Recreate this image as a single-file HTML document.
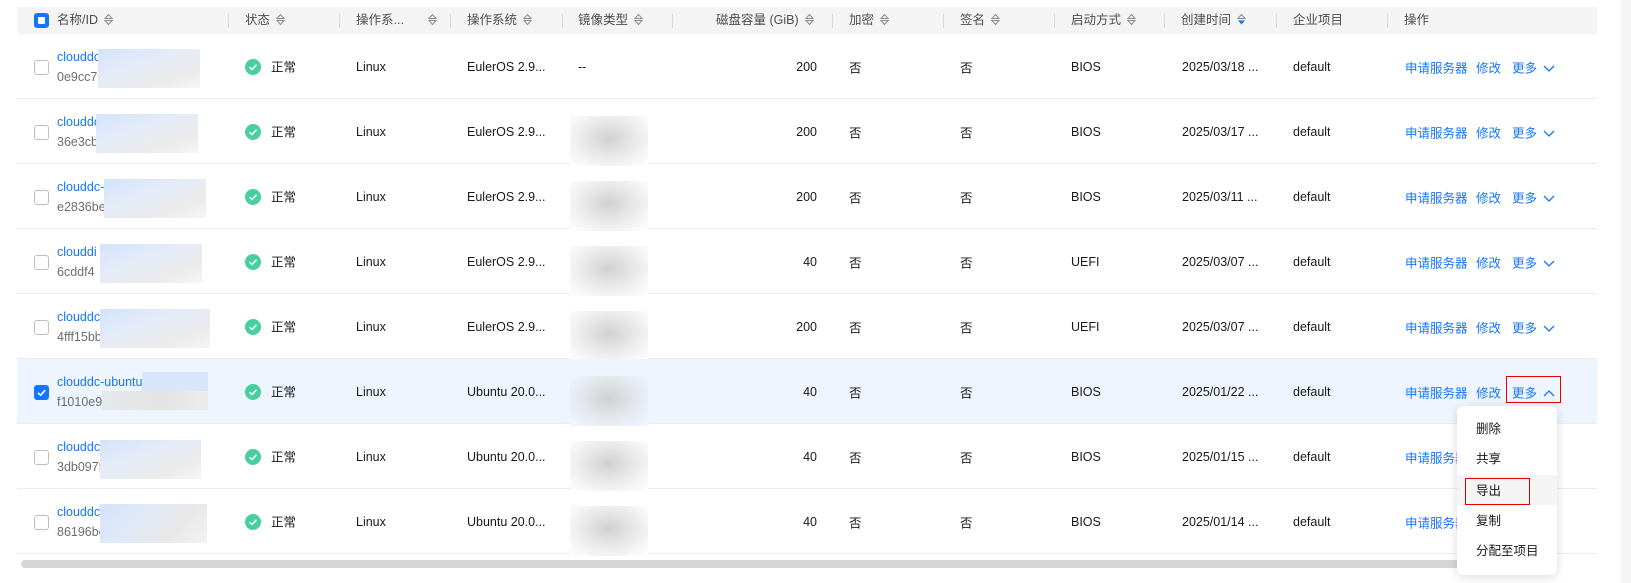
<!DOCTYPE html>
<html><head><meta charset="utf-8"><style>
*{margin:0;padding:0;box-sizing:border-box}
body{width:1631px;height:583px;background:#fff;position:relative;overflow:hidden;font-family:"Liberation Sans","Noto Sans CJK SC",sans-serif;font-size:12.5px;color:#191919}
.a{position:absolute;white-space:nowrap}
.hd{position:absolute;left:17px;top:7px;width:1580px;height:27px;background:#f4f4f4}
.h{position:absolute;top:0;line-height:27px;color:#4d4d4d;white-space:nowrap}
.sep{position:absolute;top:7px;width:1px;height:14px;background:#d9d9d9}
.si{display:inline-block;vertical-align:middle;margin-left:6px;margin-top:-3px}
.row{position:absolute;left:17px;width:1580px;height:65px;border-bottom:1px solid #ececec}
.row .c{position:absolute;top:33px;transform:translateY(-50%);white-space:nowrap}
.row .st{top:32px}
.cb{position:absolute;left:17px;top:26px;width:15px;height:15px;border:1px solid #bfbfbf;border-radius:3px;background:#fff}
.nm{position:absolute;left:40px;top:15px;color:#1476ff;line-height:16px}
.id{position:absolute;left:40px;top:35px;color:#6e6e6e;line-height:16px}
.bl{position:absolute;left:83px;top:15px;width:102px;height:39px;background:linear-gradient(160deg,#d3e3fc 0%,#e5ecf8 40%,#ebebeb 75%,#f6f6f6 100%)}
.gb{position:absolute;left:553px;top:17px;width:78px;height:50px;background:radial-gradient(ellipse at 50% 45%,#d0d0d0 0%,#e6e6e6 40%,#f6f6f6 75%,#fff 100%)}
.ok{position:absolute;left:228px;top:25px;width:16px;height:16px;border-radius:50%;background:#48cf9f}
.lk{color:#1476ff}
</style></head><body>

<div class="hd">
 <div style="position:absolute;left:17px;top:6px;width:15px;height:15px;border-radius:3px;background:#1476ff"><div style="position:absolute;left:4px;top:4px;width:7px;height:7px;background:#fff;border-radius:1px"></div></div>
 <div class="h" style="left:40px">名称/ID<svg class="si" width="9" height="13" viewBox="0 0 9 13"><path d="M1 5.5L4.5 1.5L8 5.5ZM1 7.5L4.5 11.5L8 7.5Z" fill="none" stroke="#8c8c8c" stroke-width="1"/></svg></div>
 <div class="sep" style="left:211px"></div>
 <div class="h" style="left:228px">状态<svg class="si" width="9" height="13" viewBox="0 0 9 13"><path d="M1 5.5L4.5 1.5L8 5.5ZM1 7.5L4.5 11.5L8 7.5Z" fill="none" stroke="#8c8c8c"/></svg></div>
 <div class="sep" style="left:322px"></div>
 <div class="h" style="left:339px">操作系...</div><div class="h" style="left:405px"><svg class="si" width="9" height="13" viewBox="0 0 9 13"><path d="M1 5.5L4.5 1.5L8 5.5ZM1 7.5L4.5 11.5L8 7.5Z" fill="none" stroke="#8c8c8c"/></svg></div>
 <div class="sep" style="left:433px"></div>
 <div class="h" style="left:450px">操作系统<svg class="si" width="9" height="13" viewBox="0 0 9 13"><path d="M1 5.5L4.5 1.5L8 5.5ZM1 7.5L4.5 11.5L8 7.5Z" fill="none" stroke="#8c8c8c"/></svg></div>
 <div class="sep" style="left:545px"></div>
 <div class="h" style="left:561px">镜像类型<svg class="si" width="9" height="13" viewBox="0 0 9 13"><path d="M1 5.5L4.5 1.5L8 5.5ZM1 7.5L4.5 11.5L8 7.5Z" fill="none" stroke="#8c8c8c"/></svg></div>
 <div class="sep" style="left:655px"></div>
 <div class="h" style="left:699px">磁盘容量 (GiB)<svg class="si" width="9" height="13" viewBox="0 0 9 13"><path d="M1 5.5L4.5 1.5L8 5.5ZM1 7.5L4.5 11.5L8 7.5Z" fill="none" stroke="#8c8c8c"/></svg></div>
 <div class="sep" style="left:815px"></div>
 <div class="h" style="left:832px">加密<svg class="si" width="9" height="13" viewBox="0 0 9 13"><path d="M1 5.5L4.5 1.5L8 5.5ZM1 7.5L4.5 11.5L8 7.5Z" fill="none" stroke="#8c8c8c"/></svg></div>
 <div class="sep" style="left:926px"></div>
 <div class="h" style="left:943px">签名<svg class="si" width="9" height="13" viewBox="0 0 9 13"><path d="M1 5.5L4.5 1.5L8 5.5ZM1 7.5L4.5 11.5L8 7.5Z" fill="none" stroke="#8c8c8c"/></svg></div>
 <div class="sep" style="left:1037px"></div>
 <div class="h" style="left:1054px">启动方式<svg class="si" width="9" height="13" viewBox="0 0 9 13"><path d="M1 5.5L4.5 1.5L8 5.5ZM1 7.5L4.5 11.5L8 7.5Z" fill="none" stroke="#8c8c8c"/></svg></div>
 <div class="sep" style="left:1147px"></div>
 <div class="h" style="left:1164px">创建时间<svg class="si" width="9" height="13" viewBox="0 0 9 13"><path d="M1 5.5L4.5 1.5L8 5.5Z" fill="none" stroke="#8c8c8c"/><path d="M1 7.5L4.5 11.5L8 7.5Z" fill="#1476ff"/></svg></div>
 <div class="sep" style="left:1259px"></div>
 <div class="h" style="left:1276px">企业项目</div>
 <div class="sep" style="left:1370px"></div>
 <div class="h" style="left:1387px">操作</div>
</div>

<div class="row" style="top:34px">
 <div class="cb"></div><div class="nm">clouddc</div><div class="id">0e9cc71</div><div class="bl" style="left:81px"></div>
 <div class="ok"><svg width="16" height="16"><path d="M4.5 8.2L7 10.5L11.5 5.8" fill="none" stroke="#fff" stroke-width="1.5"/></svg></div>
 <div class="c st" style="left:254px">正常</div><div class="c" style="left:339px">Linux</div><div class="c" style="left:450px">EulerOS 2.9...</div><div class="c" style="left:561px">--</div>
 <div class="c" style="left:770px;width:30px;text-align:right">200</div><div class="c" style="left:832px">否</div><div class="c" style="left:943px">否</div><div class="c" style="left:1054px">BIOS</div><div class="c" style="left:1165px">2025/03/18 ...</div><div class="c" style="left:1276px">default</div>
 <div class="c lk" style="left:1388px">申请服务器</div><div class="c lk" style="left:1459px">修改</div><div class="c lk" style="left:1495px">更多 <svg width="12" height="8" style="margin-left:3px"><path d="M1 1.5L6 6.5L11 1.5" fill="none" stroke="#1476ff" stroke-width="1.3"/></svg></div>
</div>
<div class="row" style="top:99px">
 <div class="cb"></div><div class="nm">clouddc</div><div class="id">36e3cb</div><div class="bl" style="left:79px"></div>
 <div class="ok"><svg width="16" height="16"><path d="M4.5 8.2L7 10.5L11.5 5.8" fill="none" stroke="#fff" stroke-width="1.5"/></svg></div>
 <div class="c st" style="left:254px">正常</div><div class="c" style="left:339px">Linux</div><div class="c" style="left:450px">EulerOS 2.9...</div><div class="gb"></div>
 <div class="c" style="left:770px;width:30px;text-align:right">200</div><div class="c" style="left:832px">否</div><div class="c" style="left:943px">否</div><div class="c" style="left:1054px">BIOS</div><div class="c" style="left:1165px">2025/03/17 ...</div><div class="c" style="left:1276px">default</div>
 <div class="c lk" style="left:1388px">申请服务器</div><div class="c lk" style="left:1459px">修改</div><div class="c lk" style="left:1495px">更多 <svg width="12" height="8" style="margin-left:3px"><path d="M1 1.5L6 6.5L11 1.5" fill="none" stroke="#1476ff" stroke-width="1.3"/></svg></div>
</div>
<div class="row" style="top:164px">
 <div class="cb"></div><div class="nm">clouddc-</div><div class="id">e2836be</div><div class="bl" style="left:87px"></div>
 <div class="ok"><svg width="16" height="16"><path d="M4.5 8.2L7 10.5L11.5 5.8" fill="none" stroke="#fff" stroke-width="1.5"/></svg></div>
 <div class="c st" style="left:254px">正常</div><div class="c" style="left:339px">Linux</div><div class="c" style="left:450px">EulerOS 2.9...</div><div class="gb"></div>
 <div class="c" style="left:770px;width:30px;text-align:right">200</div><div class="c" style="left:832px">否</div><div class="c" style="left:943px">否</div><div class="c" style="left:1054px">BIOS</div><div class="c" style="left:1165px">2025/03/11 ...</div><div class="c" style="left:1276px">default</div>
 <div class="c lk" style="left:1388px">申请服务器</div><div class="c lk" style="left:1459px">修改</div><div class="c lk" style="left:1495px">更多 <svg width="12" height="8" style="margin-left:3px"><path d="M1 1.5L6 6.5L11 1.5" fill="none" stroke="#1476ff" stroke-width="1.3"/></svg></div>
</div>
<div class="row" style="top:229px">
 <div class="cb"></div><div class="nm">clouddi</div><div class="id">6cddf4</div><div class="bl" style="left:83px"></div>
 <div class="ok"><svg width="16" height="16"><path d="M4.5 8.2L7 10.5L11.5 5.8" fill="none" stroke="#fff" stroke-width="1.5"/></svg></div>
 <div class="c st" style="left:254px">正常</div><div class="c" style="left:339px">Linux</div><div class="c" style="left:450px">EulerOS 2.9...</div><div class="gb"></div>
 <div class="c" style="left:770px;width:30px;text-align:right">40</div><div class="c" style="left:832px">否</div><div class="c" style="left:943px">否</div><div class="c" style="left:1054px">UEFI</div><div class="c" style="left:1165px">2025/03/07 ...</div><div class="c" style="left:1276px">default</div>
 <div class="c lk" style="left:1388px">申请服务器</div><div class="c lk" style="left:1459px">修改</div><div class="c lk" style="left:1495px">更多 <svg width="12" height="8" style="margin-left:3px"><path d="M1 1.5L6 6.5L11 1.5" fill="none" stroke="#1476ff" stroke-width="1.3"/></svg></div>
</div>
<div class="row" style="top:294px">
 <div class="cb"></div><div class="nm">clouddc</div><div class="id">4fff15bb</div><div class="bl" style="left:83px;width:110px"></div>
 <div class="ok"><svg width="16" height="16"><path d="M4.5 8.2L7 10.5L11.5 5.8" fill="none" stroke="#fff" stroke-width="1.5"/></svg></div>
 <div class="c st" style="left:254px">正常</div><div class="c" style="left:339px">Linux</div><div class="c" style="left:450px">EulerOS 2.9...</div><div class="gb"></div>
 <div class="c" style="left:770px;width:30px;text-align:right">200</div><div class="c" style="left:832px">否</div><div class="c" style="left:943px">否</div><div class="c" style="left:1054px">UEFI</div><div class="c" style="left:1165px">2025/03/07 ...</div><div class="c" style="left:1276px">default</div>
 <div class="c lk" style="left:1388px">申请服务器</div><div class="c lk" style="left:1459px">修改</div><div class="c lk" style="left:1495px">更多 <svg width="12" height="8" style="margin-left:3px"><path d="M1 1.5L6 6.5L11 1.5" fill="none" stroke="#1476ff" stroke-width="1.3"/></svg></div>
</div>
<div class="row" style="top:359px;background:#eef5ff">
 <div class="cb" style="background:#1476ff;border-color:#1476ff"><svg width="13" height="13" style="position:absolute;left:0;top:0"><path d="M3 6.8L5.6 9.2L10.2 4.2" fill="none" stroke="#fff" stroke-width="1.6"/></svg></div>
 <div class="nm">clouddc-ubuntu-</div><div class="id">f1010e9</div>
 <div style="position:absolute;left:125px;top:13px;width:66px;height:19px;background:#d8e6fc"></div>
 <div style="position:absolute;left:85px;top:32px;width:106px;height:19px;background:linear-gradient(90deg,#e6e9ee,#e3e3e3 60%,#ececec)"></div>
 <div class="ok"><svg width="16" height="16"><path d="M4.5 8.2L7 10.5L11.5 5.8" fill="none" stroke="#fff" stroke-width="1.5"/></svg></div>
 <div class="c st" style="left:254px">正常</div><div class="c" style="left:339px">Linux</div><div class="c" style="left:450px">Ubuntu 20.0...</div><div class="gb" style="background:radial-gradient(ellipse at 50% 45%,#d0d0d0 0%,#e4e7ec 50%,#eef5ff 90%)"></div>
 <div class="c" style="left:770px;width:30px;text-align:right">40</div><div class="c" style="left:832px">否</div><div class="c" style="left:943px">否</div><div class="c" style="left:1054px">BIOS</div><div class="c" style="left:1165px">2025/01/22 ...</div><div class="c" style="left:1276px">default</div>
 <div class="c lk" style="left:1388px">申请服务器</div><div class="c lk" style="left:1459px">修改</div><div class="c lk" style="left:1495px">更多 <svg width="12" height="8" style="margin-left:3px"><path d="M1 6.5L6 1.5L11 6.5" fill="none" stroke="#1476ff" stroke-width="1.3"/></svg></div>
 <div style="position:absolute;left:1489px;top:17px;width:55px;height:27px;border:1.5px solid #e60000"></div>
</div>
<div class="row" style="top:424px">
 <div class="cb"></div><div class="nm">clouddc-</div><div class="id">3db0975&nbsp;&nbsp;&nbsp;&nbsp;&nbsp;&nbsp;&nbsp;&nbsp;&nbsp;&nbsp;&nbsp;&nbsp;&nbsp;&nbsp;&nbsp;&nbsp;&nbsp;&nbsp;&nbsp;&nbsp;&nbsp;&nbsp;&nbsp;&nbsp;&nbsp;.</div><div class="bl" style="left:83px;top:16px;width:101px"></div>
 <div class="ok"><svg width="16" height="16"><path d="M4.5 8.2L7 10.5L11.5 5.8" fill="none" stroke="#fff" stroke-width="1.5"/></svg></div>
 <div class="c st" style="left:254px">正常</div><div class="c" style="left:339px">Linux</div><div class="c" style="left:450px">Ubuntu 20.0...</div><div class="gb"></div>
 <div class="c" style="left:770px;width:30px;text-align:right">40</div><div class="c" style="left:832px">否</div><div class="c" style="left:943px">否</div><div class="c" style="left:1054px">BIOS</div><div class="c" style="left:1165px">2025/01/15 ...</div><div class="c" style="left:1276px">default</div>
 <div class="c lk" style="left:1388px">申请服务器</div>
</div>
<div class="row" style="top:489px">
 <div class="cb"></div><div class="nm">clouddc-</div><div class="id">86196be</div><div class="bl" style="left:83px;top:15px;width:107px;background:linear-gradient(130deg,#d3e3fc 0%,#e0e9f8 35%,#e8e8e8 70%,#f2f2f2 100%)"></div>
 <div class="ok"><svg width="16" height="16"><path d="M4.5 8.2L7 10.5L11.5 5.8" fill="none" stroke="#fff" stroke-width="1.5"/></svg></div>
 <div class="c st" style="left:254px">正常</div><div class="c" style="left:339px">Linux</div><div class="c" style="left:450px">Ubuntu 20.0...</div><div class="gb"></div>
 <div class="c" style="left:770px;width:30px;text-align:right">40</div><div class="c" style="left:832px">否</div><div class="c" style="left:943px">否</div><div class="c" style="left:1054px">BIOS</div><div class="c" style="left:1165px">2025/01/14 ...</div><div class="c" style="left:1276px">default</div>
 <div class="c lk" style="left:1388px">申请服务器</div>
</div>

<div class="a" style="left:21px;top:560px;width:1480px;height:8px;border-radius:4px;background:#d6d6d6"></div>
<div class="a" style="left:1621px;top:0;width:10px;height:583px;background:#f5f5f5"></div>

<div class="a" style="left:1457px;top:406px;width:100px;height:169px;background:#fff;border-radius:6px;box-shadow:0 2px 10px rgba(0,0,0,0.14)">
 <div class="a" style="left:19px;top:14px;line-height:18px">删除</div>
 <div class="a" style="left:19px;top:44px;line-height:18px">共享</div>
 <div class="a" style="left:0;top:69px;width:100px;height:30px;background:#f4f4f4"></div>
 <div class="a" style="left:19px;top:76px;line-height:18px">导出</div>
 <div class="a" style="left:8px;top:72px;width:65px;height:27px;border:1.5px solid #e60000"></div>
 <div class="a" style="left:19px;top:106px;line-height:18px">复制</div>
 <div class="a" style="left:19px;top:136px;line-height:18px">分配至项目</div>
</div>
</body></html>
